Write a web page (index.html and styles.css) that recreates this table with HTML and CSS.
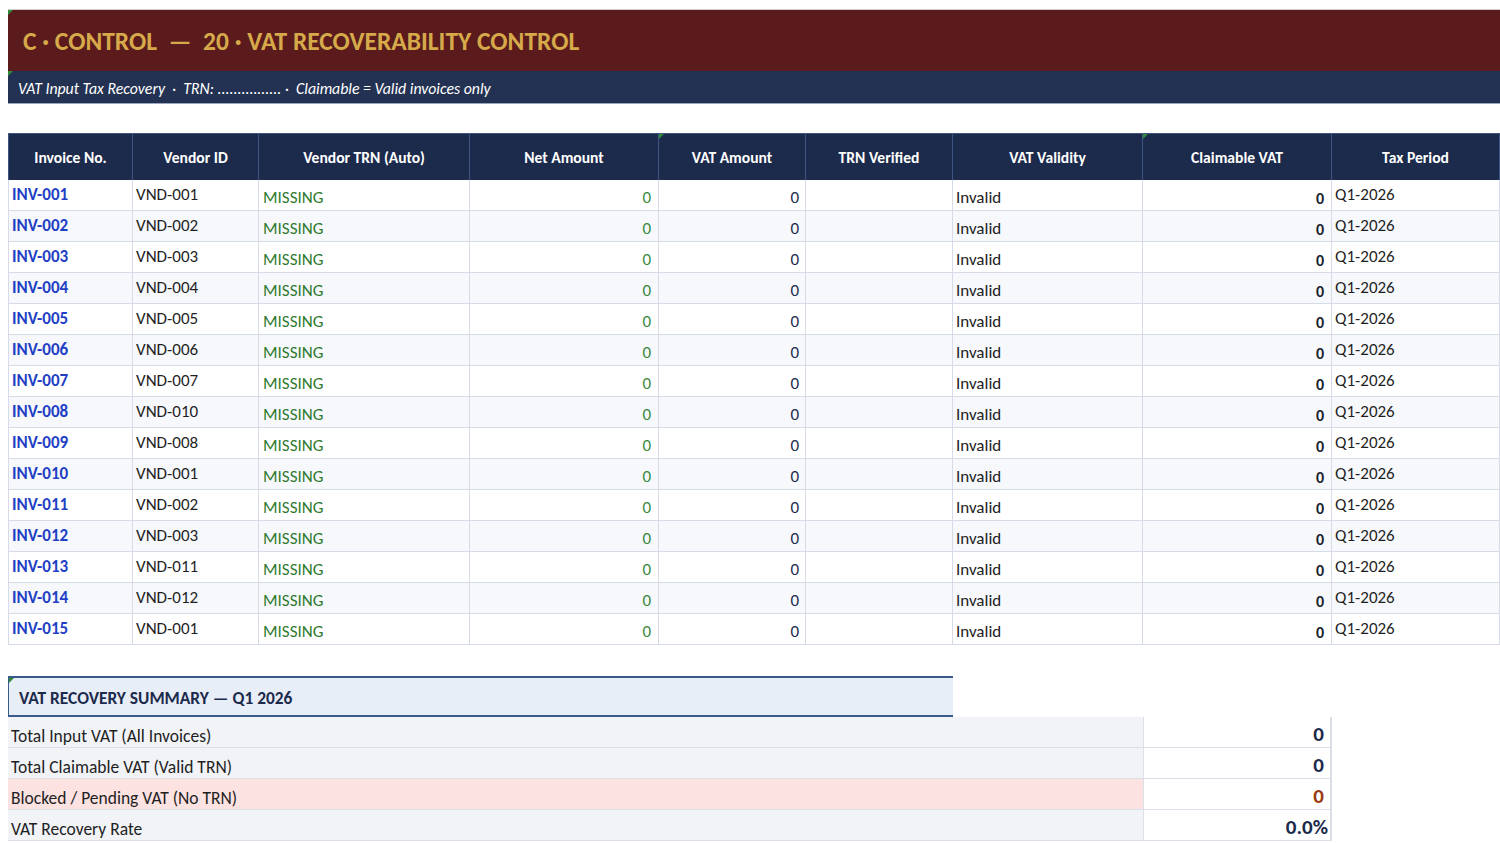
FILE: index.html
```html
<!DOCTYPE html>
<html lang="en">
<head>
<meta charset="utf-8">
<title>VAT Recoverability Control</title>
<link rel="stylesheet" href="styles.css">
</head>
<body>
<div class="sheet">
  <header class="title-band">
    <h1 class="title">C · CONTROL &nbsp;—&nbsp; 20 · VAT RECOVERABILITY CONTROL</h1>
  </header>
  <div class="sub-band">
    <p class="subtitle">VAT Input Tax Recovery &nbsp;·&nbsp; TRN: ................ · &nbsp;Claimable = Valid invoices only</p>
  </div>

  <div class="grid">
    <div class="row head">
      <div class="th">Invoice No.</div>
      <div class="th">Vendor ID</div>
      <div class="th">Vendor TRN (Auto)</div>
      <div class="th">Net Amount</div>
      <div class="th flag">VAT Amount</div>
      <div class="th">TRN Verified</div>
      <div class="th">VAT Validity</div>
      <div class="th flag">Claimable VAT</div>
      <div class="th">Tax Period</div>
    </div>
    <div id="rows"></div>
  </div>

  <section class="summary">
    <h2 class="sum-head">VAT RECOVERY SUMMARY — Q1 2026</h2>
    <div class="sum-row">
      <div class="sum-label">Total Input VAT (All Invoices)</div>
      <div class="sum-val">0</div>
    </div>
    <div class="sum-row">
      <div class="sum-label">Total Claimable VAT (Valid TRN)</div>
      <div class="sum-val">0</div>
    </div>
    <div class="sum-row blocked">
      <div class="sum-label">Blocked / Pending VAT (No TRN)</div>
      <div class="sum-val">0</div>
    </div>
    <div class="sum-row">
      <div class="sum-label">VAT Recovery Rate</div>
      <div class="sum-val pct">0.0%</div>
    </div>
  </section>
</div>
<script src="app.js"></script>
</body>
</html>
```

FILE: app.js
```js
var vendors = ["VND-001","VND-002","VND-003","VND-004","VND-005","VND-006","VND-007","VND-010","VND-008","VND-001","VND-002","VND-003","VND-011","VND-012","VND-001"];
var html = "";
for (var i = 0; i < vendors.length; i++) {
  var n = String(i + 1);
  while (n.length < 3) n = "0" + n;
  html += '<div class="row body' + (i % 2 ? ' alt' : '') + '">' +
    '<div class="td inv">INV-' + n + '</div>' +
    '<div class="td vnd">' + vendors[i] + '</div>' +
    '<div class="td trn">MISSING</div>' +
    '<div class="td net">0</div>' +
    '<div class="td vat">0</div>' +
    '<div class="td ver"></div>' +
    '<div class="td valid">Invalid</div>' +
    '<div class="td claim">0</div>' +
    '<div class="td period">Q1-2026</div>' +
    '</div>';
}
document.getElementById("rows").innerHTML = html;
```

FILE: styles.css
```css
html, body {
  margin: 0;
  padding: 0;
  background: #ffffff;
  overflow: hidden;
}
body {
  font-family: Carlito, Calibri, Lato, "Liberation Sans", sans-serif;
  color: #1f1f1f;
}
.sheet {
  padding: 9px 0 0 8px;
}
.title-band {
  position: relative;
  background: #5b1b1c;
  height: 61px;
  border-top: 1px solid #cfcfcf;
  display: flex;
  align-items: center;
  padding-left: 15px;
}
.title-band::before,
.sub-band::before,
.sum-head::before,
.th.flag::before {
  content: "";
  position: absolute;
  left: 0;
  top: 0;
  border-top: 5px solid #2f8a3a;
  border-right: 5px solid transparent;
}
.title {
  margin: 0;
  color: #d6a94a;
  font-size: 25.5px;
  font-weight: 700;
  padding-top: 1px;
}
.sub-band {
  position: relative;
  background: #233252;
  height: 33px;
  display: flex;
  align-items: center;
  padding-left: 10px;
  padding-top: 2px;
  box-sizing: border-box;
  border-bottom: 1px solid #9aa6bb;
}
.subtitle {
  margin: 0;
  color: #ffffff;
  font-style: italic;
  font-size: 15.8px;
}

.grid {
  margin-top: 29px;
  width: 1492px;
}
.row {
  display: grid;
  grid-template-columns: 125px 126px 211px 189px 147px 147px 190px 189px 168px;
}
.row.head {
  height: 47px;
  background: #1c2a4b;
  border-top: 1px solid #3d5580;
  box-sizing: border-box;
}
.th {
  position: relative;
  color: #ffffff;
  font-size: 15.6px;
  font-weight: 700;
  display: flex;
  align-items: center;
  justify-content: center;
  border-right: 1px solid #3d5580;
}
.th:first-child {
  border-left: 1px solid #3d5580;
}
.row.body {
  height: 31px;
  background: #ffffff;
}
.row.body.alt {
  background: #f6f8fc;
}
.td {
  box-sizing: border-box;
  border-right: 1px solid #d5dce8;
  border-bottom: 1px solid #d5dce8;
  font-size: 17px;
  padding: 0 3px 2px;
  white-space: nowrap;
  overflow: hidden;
  display: flex;
  align-items: flex-end;
}
.td:first-child {
  border-left: 1px solid #d5dce8;
}
.td.inv {
  color: #1f3fc4;
  font-weight: 700;
  align-items: center;
  padding-bottom: 1px;
}
.td.vnd {
  color: #1f1f1f;
  align-items: center;
  padding-bottom: 1px;
}
.td.trn {
  color: #2f7a2f;
  padding-left: 4px;
}
.td.net {
  color: #3a8a3e;
  justify-content: flex-end;
  padding-right: 7px;
}
.td.vat {
  color: #1c2a4b;
  justify-content: flex-end;
  padding-right: 6px;
}
.td.valid {
  color: #222222;
}
.td.claim {
  color: #1a1f2e;
  font-weight: 700;
  font-size: 16px;
  justify-content: flex-end;
  padding-right: 7px;
}
.td.period {
  color: #1f1f1f;
  align-items: center;
  padding-bottom: 1px;
}

.summary {
  margin-top: 31px;
  width: 1324px;
}
.sum-head {
  position: relative;
  margin: 0;
  width: 945px;
  box-sizing: border-box;
  height: 41px;
  background: #e8eef8;
  border-top: 2px solid #3a5a8c;
  border-bottom: 2px solid #3a5a8c;
  border-left: 1px solid #3a5a8c;
  color: #1c2a4b;
  font-size: 17.4px;
  font-weight: 700;
  display: flex;
  align-items: center;
  padding-left: 10px;
  padding-top: 2px;
}
.sum-row {
  display: grid;
  grid-template-columns: 1135px 189px;
  height: 31px;
  border-bottom: 1px solid #dbe0e8;
  box-sizing: border-box;
}
.sum-label {
  background: #f1f3f7;
  font-size: 17.5px;
  color: #1f1f1f;
  padding-left: 3px;
  display: flex;
  align-items: flex-end;
  padding-bottom: 0;
}
.sum-val {
  background: #ffffff;
  border-left: 1px solid #dbe0e8;
  border-right: 2px solid #dbe0e8;
  font-size: 21px;
  font-weight: 700;
  color: #1c2a4b;
  padding-right: 6px;
  padding-top: 3px;
  display: flex;
  align-items: center;
  justify-content: flex-end;
}
.sum-val.pct {
  padding-right: 2px;
}
.sum-row.blocked .sum-label {
  background: #fde2e2;
}
.sum-row.blocked .sum-val {
  color: #9a3b12;
}
```
